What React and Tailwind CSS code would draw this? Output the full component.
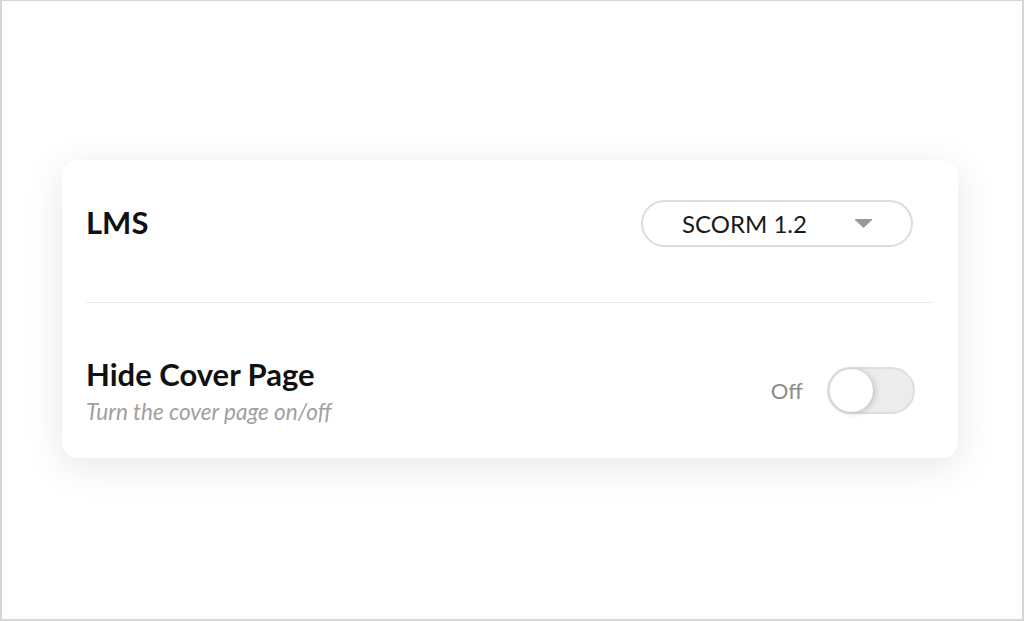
import { useState } from 'react'

function Caret() {
  return (
    <svg width="19" height="9" viewBox="0 0 19 9" className="shrink-0">
      <path d="M1 0.5h17L9.5 8.5z" fill="#9a9a9a" stroke="#9a9a9a" strokeLinejoin="round" />
    </svg>
  )
}

function Toggle({ on, onChange }) {
  return (
    <button
      onClick={() => onChange(!on)}
      className="relative w-[88px] h-[47px] rounded-full bg-[#ececec] border-2 border-[#dedede] shrink-0"
    >
      <span
        className={
          'absolute top-[0px] left-[1px] w-[43px] h-[43px] rounded-full bg-white shadow-[2px_1px_6px_rgba(0,0,0,0.18)] transition-transform ' +
          (on ? 'translate-x-[39px]' : 'translate-x-0')
        }
      />
    </button>
  )
}

export default function App() {
  const [hideCover, setHideCover] = useState(false)

  return (
    <div
      className="h-[621px] w-full bg-white border-x-2 border-t border-b-2 border-[#d6d6d6] flex items-center justify-center"
      style={{ fontFamily: 'Lato, "Open Sans", sans-serif' }}
    >
      <div className="w-[896px] bg-white rounded-[16px] shadow-[0_8px_40px_rgba(0,0,0,0.1)] px-6 -mt-[2px] mr-[4px]">
        {/* LMS row */}
        <div className="flex items-center justify-between pt-[40px] pb-[55px] border-b border-[#ececec]">
          <h2 className="text-[31px] font-bold text-[#111] leading-none mb-[2px]">LMS</h2>
          <button className="w-[272px] h-[47px] mr-[21px] rounded-full border-2 border-[#dcdcdc] flex items-center pl-[39px] pr-[38px] justify-between">
            <span className="text-[24px] text-[#1a1a1a] leading-none">SCORM 1.2</span>
            <Caret />
          </button>
        </div>

        {/* Hide cover page row */}
        <div className="flex items-center justify-between pt-[53px] pb-[33px]">
          <div>
            <h3 className="text-[31px] font-bold text-[#111] leading-[36px]">Hide Cover Page</h3>
            <p className="mt-[7px] text-[22.5px] italic text-[#a0a0a0] leading-[26px]">
              Turn the cover page on/off
            </p>
          </div>
          <div className="flex items-center gap-[24px] mr-[19px]">
            <span className="text-[22px] text-[#8c8c8c]">{hideCover ? 'On' : 'Off'}</span>
            <Toggle on={hideCover} onChange={setHideCover} />
          </div>
        </div>
      </div>
    </div>
  )
}
